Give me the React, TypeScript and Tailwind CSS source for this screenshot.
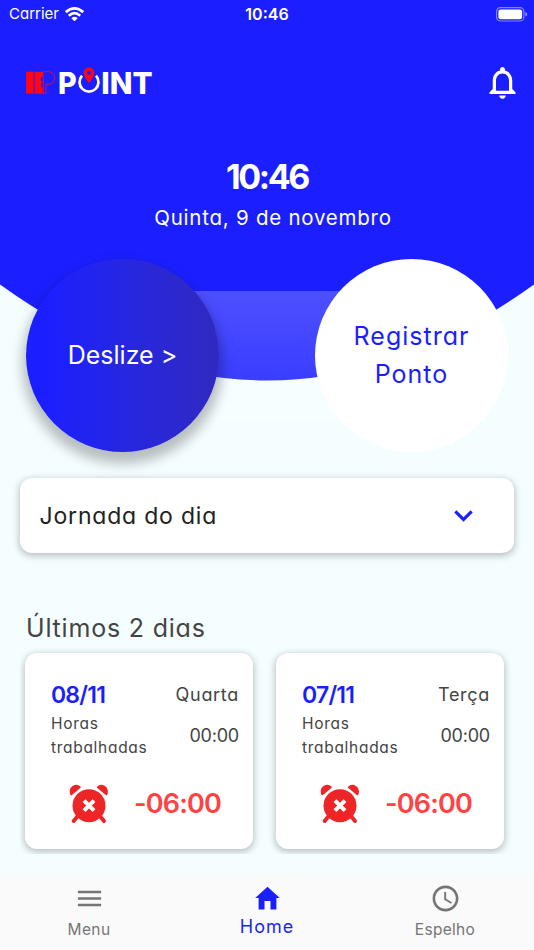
import { MdExpandMore, MdMenu, MdNotificationsNone, MdSchedule } from 'react-icons/md'

const days = [
  { date: '08/11', weekday: 'Quarta', worked: '00:00', balance: '-06:00' },
  { date: '07/11', weekday: 'Terça', worked: '00:00', balance: '-06:00' },
]

const WifiIcon = () => (
  <svg className="w-[19px] h-[15px]" viewBox="0 0 57 45" fill="none" stroke="#fff" strokeWidth="8">
    <path d="M2.5 15.5Q28.5 -7 54.5 15.5" />
    <path d="M11.5 26Q28.5 11 45.5 26" />
    <path d="M28.5 43L19 33.5Q28.5 25 38 33.5Z" fill="#fff" stroke="none" />
  </svg>
)

const BatteryIcon = () => (
  <svg className="w-8 h-[15px]" viewBox="0 0 32 15">
    <rect x=".6" y=".6" width="27.3" height="13.4" rx="3.8" fill="none" stroke="#fff" strokeOpacity=".45" strokeWidth="1.2" />
    <rect x="2.4" y="2.4" width="23.7" height="9.8" rx="2.2" fill="#fff" />
    <path d="M29.4 5v4.6Q31.2 9 31.2 7.3T29.4 5Z" fill="#fff" fillOpacity=".5" />
  </svg>
)

const Logo = () => (
  <svg className="w-[130px] h-[38px] -mt-px" viewBox="0 -12 390 114">
    <rect x="3" y="17" width="23" height="66" fill="#ff0612" />
    <path d="M29 17H55V29L47 36V43L53 49L48 55V61L53 66V83H29Z" fill="#ff0612" />
    <path d="M57 17H70Q89 19 89 36T70 55H63V83H55V30" fill="none" stroke="#ff0612" strokeWidth="2.6" />
    <g fill="#fff" fontFamily="Inter, sans-serif" fontWeight="800" fontSize="90">
      <text x="99" y="83" textLength="56" lengthAdjust="spacingAndGlyphs">P</text>
      <text x="229" y="83" textLength="154" lengthAdjust="spacingAndGlyphs">INT</text>
    </g>
    <path d="M171 29A28.5 28.5 0 1 0 213 29" fill="none" stroke="#fff" strokeWidth="8" />
    <path d="M192 52Q176 30 176 20A16 16 0 0 1 208 20Q208 30 192 52Z" fill="#ff0612" />
    <circle cx="192" cy="20" r="6" fill="#1b1fff" />
  </svg>
)

const AlarmIcon = () => (
  <svg className="w-10 h-10" viewBox="0 0 120 120" fill="#ee2527">
    <path d="M4 32Q-2 14 11 6T35 8Q37 11 33 13L9 33Q6 35 4 32Z" />
    <path d="M115 32Q121 14 108 6T84 8Q82 11 86 13L110 33Q113 35 115 32Z" />
    <path d="M24 99L14 111M95 99L105 111" stroke="#ee2527" strokeWidth="12" strokeLinecap="round" />
    <circle cx="60" cy="65" r="49.5" />
    <path d="M45 50L75 80M75 50L45 80" stroke="#fff" strokeWidth="12" />
  </svg>
)

const HomeIcon = () => (
  <svg className="w-[31px] h-[31px]" viewBox="0 0 31 31" fill="currentColor">
    <path d="M15.5 3.8L27.8 15H24.4V26.5H18.5V18H12.5V26.5H6.6V15H3.2Z" />
  </svg>
)

export default function App() {
  return (
    <div className="relative isolate flex flex-col w-[534px] h-[950px] overflow-hidden bg-[#f5feff] font-[Inter,sans-serif] font-[370] [font-feature-settings:'cv11']">
      {/* Curved backdrop */}
      <svg className="absolute inset-x-0 top-0 -z-10 w-[534px] h-[381px]" viewBox="0 0 534 381">
        <path d="M0 0V284.5Q267 476.5 534 284.5V0Z" fill="#1b1fff" />
      </svg>

      {/* Status bar */}
      <div className="grid grid-cols-3 items-center h-7 pl-[9px] pr-[6px] text-white">
        <div className="flex items-center gap-[6px]">
          <span className="text-[15px]">Carrier</span>
          <WifiIcon />
        </div>
        <span className="-ml-[3px] text-center text-base font-semibold">10:46</span>
        <div className="flex justify-end"><BatteryIcon /></div>
      </div>

      {/* Header */}
      <header className="flex items-start justify-between mt-[35px] h-[39px] pl-[25px] pr-3">
        <Logo />
        <button aria-label="Notificações">
          <MdNotificationsNone className="w-[39px] h-[39px] text-white" />
        </button>
      </header>

      <div className="mt-[55px] text-center text-white">
        <p className="text-[34px] leading-10 font-bold tracking-[-2.4px]">10:46</p>
        <p className="mt-1.5 pl-3 text-[20.5px] leading-[30px] tracking-[0.75px]">Quinta, 9 de novembro</p>
      </div>

      {/* Slide to register */}
      <div className="relative flex justify-between mt-[25.8px] mx-[26px]">
        <div className="absolute -z-10 top-8 inset-x-[90px] h-[129px] bg-gradient-to-b from-white/22 to-white/10" />
        <button className="w-[193px] h-[193px] pt-px rounded-full bg-gradient-to-r from-[#1b1fff] from-10% to-[#3029c0] text-white text-[25px] shadow-[0_8px_12px_4px_rgba(0,0,0,0.25)]">
          Deslize &gt;
        </button>
        <div className="flex items-center justify-center w-[193px] h-[193px] rounded-full bg-white text-center text-[25px] leading-[38.4px] tracking-[1px] text-[#1b1fff]">
          Registrar<br />Ponto
        </div>
      </div>

      {/* Day summary */}
      <button className="flex shrink-0 items-center justify-between mt-[26px] mx-[19.6px] h-[75px] pl-5 pr-8 rounded-xl bg-white shadow-[0_2px_7px_1px_rgba(0,0,0,0.25)]">
        <span className="pt-px text-[23px] tracking-[0.8px] text-[#222]">Jornada do dia</span>
        <MdExpandMore className="w-[37px] h-[37px] text-[#1b1fff]" />
      </button>

      {/* Last days */}
      <h2 className="mt-[56.7px] pl-[26px] text-[25px] leading-[38px] tracking-[0.8px] text-[#444]">Últimos 2 dias</h2>
      <div className="flex shrink-0 gap-[23px] mx-5 h-[206.5px] pt-[5.5px] px-[5px] overflow-hidden">
        {days.map(day => (
          <div key={day.date} className="w-[228px] h-[196px] pt-[25.4px] pl-[26px] pr-[14px] rounded-xl bg-white text-[#444] shadow-[0_2px_7px_1px_rgba(0,0,0,0.25)]">
            <div className="flex items-center justify-between leading-[34px]">
              <span className="text-[23px] font-semibold tracking-[-0.8px] text-[#1b1fff]">{day.date}</span>
              <span className="text-[18px] tracking-[0.7px]">{day.weekday}</span>
            </div>
            <div className="flex items-center justify-between">
              <span className="w-[110px] text-[15.5px] leading-[23.2px] tracking-[0.7px]">Horas trabalhadas</span>
              <span className="text-[18px] tracking-[-0.2px]">{day.worked}</span>
            </div>
            <div className="flex items-center gap-[25px] mt-[25px] pl-[18px]">
              <AlarmIcon />
              <span className="text-[27px] leading-[38px] font-semibold tracking-[-0.8px] text-[#ff4343]">{day.balance}</span>
            </div>
          </div>
        ))}
      </div>

      {/* Bottom navigation */}
      <nav className="grid grid-cols-3 mt-auto h-[77px] pt-[9.5px] bg-[#fafafa] text-[#757575]">
        <a className="flex flex-col items-center">
          <MdMenu className="w-[31px] h-[31px]" />
          <span className="mt-[5px] text-[15.5px] leading-[22px] tracking-[0.4px]">Menu</span>
        </a>
        <a className="flex flex-col items-center text-[#1b1fff]">
          <HomeIcon />
          <span className="text-[18px] leading-[26px] tracking-[1px]">Home</span>
        </a>
        <a className="flex flex-col items-center">
          <MdSchedule className="w-[31px] h-[31px]" />
          <span className="mt-[5px] text-[15.5px] leading-[22px] tracking-[0.3px]">Espelho</span>
        </a>
      </nav>
    </div>
  )
}
